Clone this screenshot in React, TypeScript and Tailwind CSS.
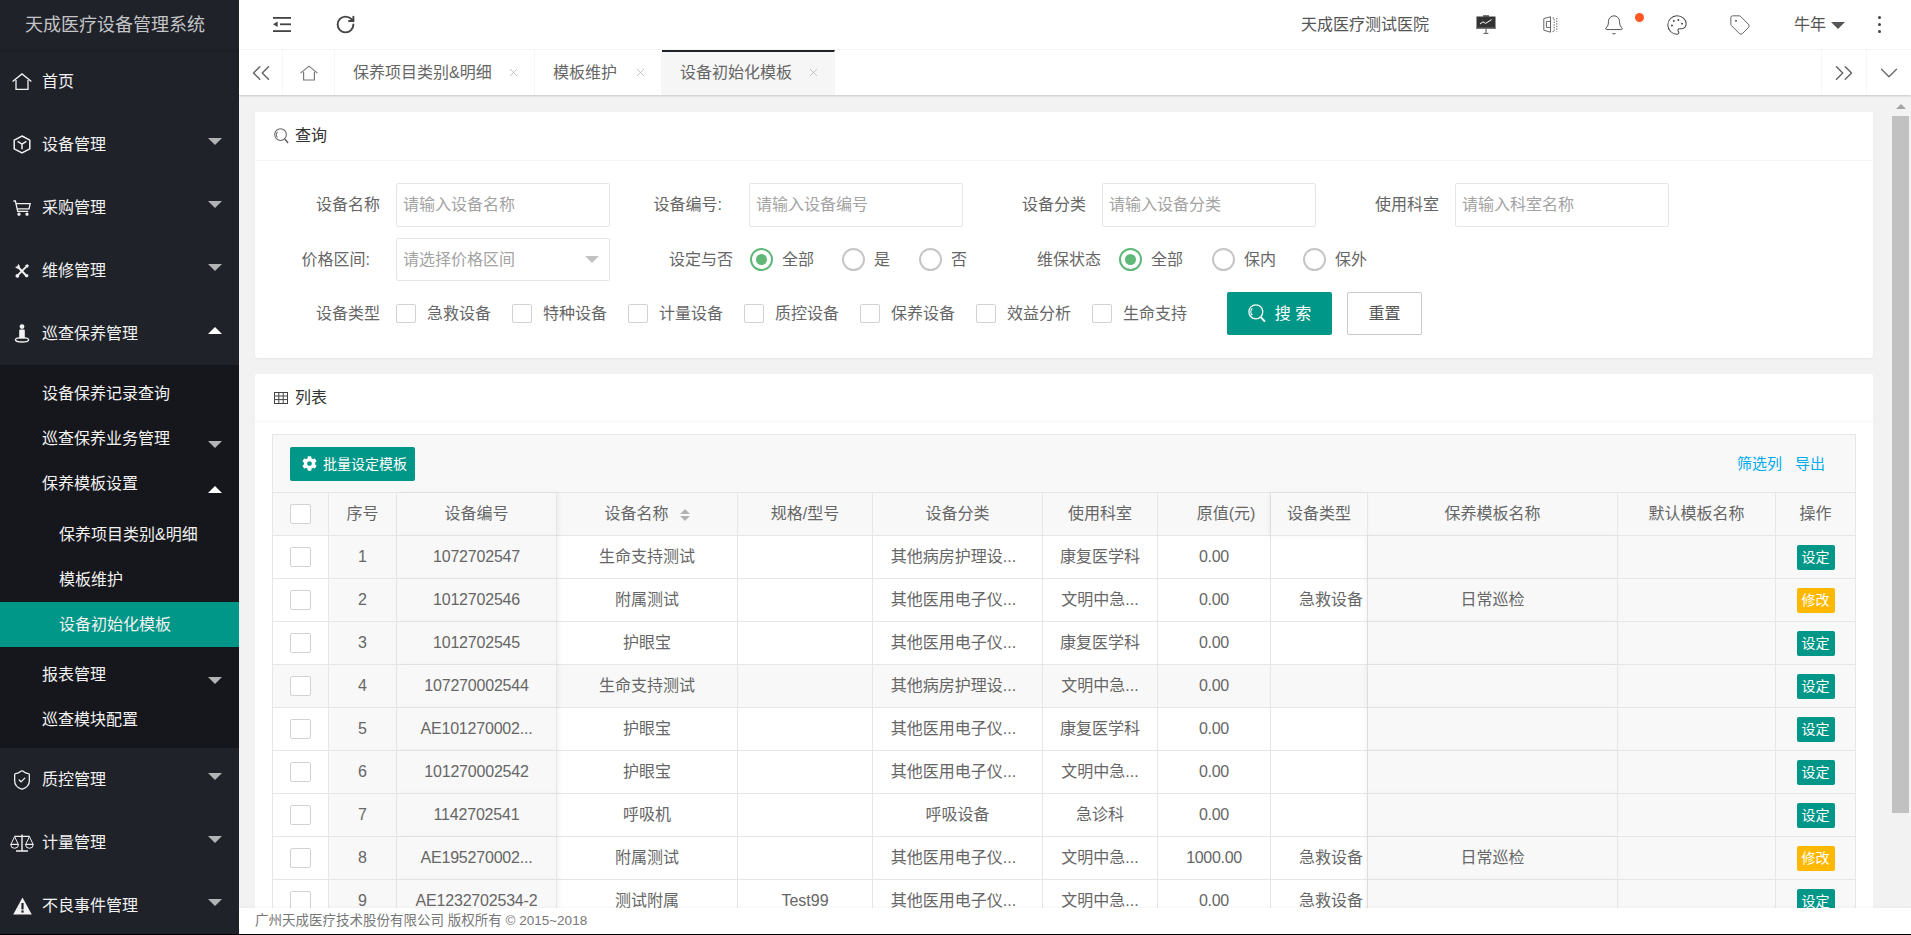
import { useState } from "react";
import {
  Bell,
  ChevronDown,
  ChevronsLeft,
  ChevronsRight,
  Palette,
  RotateCw,
  ShieldCheck,
  Tag,
  X,
} from "lucide-react";
import { FaCog } from "react-icons/fa";

const LINE = "border-[#e6e6e6]";

/* ---------- icons ---------- */

function HomeIcon({ className }: { className?: string }) {
  return (
    <svg viewBox="0 0 20 17" className={className} fill="none" stroke="currentColor" strokeWidth="1.3">
      <path d="M.6 8.6 10 .9l9.4 7.7" />
      <path d="M4 7v9.3h12V7" />
    </svg>
  );
}

function CubeIcon() {
  return (
    <svg viewBox="0 0 18 19" className="h-[19px] w-[18px]" fill="none" stroke="currentColor" strokeWidth="1.5">
      <path d="M9 1 16.8 5.2v8.6L9 18l-7.8-4.2V5.2z" />
      <path d="M4.6 6.4 9 9.2l4.4-2.8M9 9.2v5" />
    </svg>
  );
}

function CartIcon() {
  return (
    <svg viewBox="0 0 18 16" className="h-[16px] w-[18px]" fill="none" stroke="currentColor" strokeWidth="1.3">
      <path d="M.4 1h2l2.3 10.4h10.6" />
      <path d="M3.2 3.6h14l-1.2 5.2H4.3" />
      <circle cx="6" cy="14.2" r="1" fill="currentColor" />
      <circle cx="14" cy="14.2" r="1" fill="currentColor" />
    </svg>
  );
}

function ToolsIcon() {
  return (
    <svg viewBox="0 0 14 14" className="h-[14px] w-[14px]" fill="none" stroke="currentColor">
      <path d="M3 3 11.6 12" strokeWidth="2" />
      <path d="M11.6 2.4 2.6 11.4" strokeWidth="1.8" />
      <path d="M.6 3.2A2.8 2.8 0 0 0 4.2 3.8 2.8 2.8 0 0 0 3.4.4L2.6 2.4z" fill="currentColor" strokeWidth=".6" />
      <path d="m10.4 1.6 2-1.2 1.2 1.2-1.2 2z" fill="currentColor" strokeWidth=".6" />
      <circle cx="2.4" cy="11.8" r="1.9" fill="currentColor" stroke="none" />
      <path d="m9.8 12.4 2.6-2.6 1.2 2.2-1.6 1.6z" fill="currentColor" stroke="none" />
    </svg>
  );
}

function PersonIcon() {
  return (
    <svg viewBox="0 0 16 19" className="h-[19px] w-[16px]" fill="currentColor">
      <circle cx="8" cy="2.6" r="2.4" />
      <rect x="5.2" y="5.4" width="5.6" height="9" rx="1" />
      <ellipse cx="8" cy="15.8" rx="6.6" ry="2.2" fill="none" stroke="currentColor" strokeWidth="1.4" />
    </svg>
  );
}

function ScaleIcon() {
  return (
    <svg viewBox="0 0 24 18" className="h-[18px] w-[24px]" fill="none" stroke="currentColor" strokeWidth="1">
      <path d="M12 .5v16.4M6 17h12M4.4 2.4h15.2" strokeWidth="1.4" />
      <path d="M4.6 2.6.9 10.4h7.4zM19.4 2.6l-3.7 7.8h7.4z" />
      <path d="M.7 10.4a3.9 3.9 0 0 0 7.8 0zM15.5 10.4a3.9 3.9 0 0 0 7.8 0z" />
    </svg>
  );
}

function WarnIcon() {
  return (
    <svg viewBox="0 0 19 18" className="h-[18px] w-[19px]">
      <path d="M9.5.5 18.8 17.6H.2z" fill="currentColor" />
      <rect x="8.4" y="6" width="2.2" height="6.4" fill="#20222a" />
      <rect x="8.4" y="13.4" width="2.2" height="2.2" fill="#20222a" />
    </svg>
  );
}

function SearchIcon({ className }: { className?: string }) {
  return (
    <svg viewBox="0 0 17 18" className={className} fill="none" stroke="currentColor" strokeWidth="1.2">
      <circle cx="7.4" cy="7.4" r="6.6" />
      <path d="M4 4.2a4.6 4.6 0 0 0 0 6.4" />
      <path d="m12.2 12.4 3.8 4.4" strokeWidth="1.8" />
    </svg>
  );
}

function GridIcon() {
  return (
    <svg viewBox="0 0 14 12" className="h-[12px] w-[14px]" fill="none" stroke="#444" strokeWidth="1">
      <rect x=".5" y=".5" width="13" height="11" />
      <path d="M.5 4h13M.5 7.6h13M4.8.5v11M9.2.5v11" />
    </svg>
  );
}

function ShrinkIcon() {
  return (
    <svg viewBox="0 0 18 15" className="h-[15px] w-[18px]" fill="#444">
      <rect x="0" y="0" width="18" height="1.8" />
      <rect x="7" y="6.4" width="11" height="1.8" />
      <rect x="0" y="13.2" width="18" height="1.8" />
      <path d="M0 7.3 4.6 4.6v5.4z" />
    </svg>
  );
}

function BoardIcon() {
  return (
    <svg viewBox="0 0 20 19" className="h-[19px] w-[20px]">
      <rect x="7" y="0" width="6" height="2" fill="#777" />
      <rect x="0.5" y="1.5" width="19" height="11.5" fill="#333" />
      <rect x="0" y="12.6" width="20" height="1.4" fill="#777" />
      <path d="m4 9 3-2.2 2.6 1.6L15.6 4.6" fill="none" stroke="#fff" strokeWidth="1" />
      <path d="M10 14v4M7.6 18.4h4.8" stroke="#555" strokeWidth="1" />
    </svg>
  );
}

function BookIcon() {
  return (
    <svg viewBox="0 0 16 17" className="h-[17px] w-[16px]" fill="none" stroke="#666" strokeWidth="1">
      <path d="M.8 2.6 7.5.8v15.4l-6.7-2z" />
      <path d="M3.4 5.4h4.1v6H3.4z" />
      <path d="M9.6 2h1.6v13.6H9.6M13.8 2v13.6" strokeDasharray="1.4 1.2" />
    </svg>
  );
}

/* ---------- sidebar ---------- */

function Caret({ up, className }: { up?: boolean; className: string }) {
  return (
    <span
      className={`ml-auto mr-[17px] h-0 w-0 border-x-[7px] border-x-transparent ${
        up ? "border-b-[7px] border-b-white" : "border-t-[7px] border-t-[#b2b3b5]"
      } ${className}`}
    />
  );
}

function MenuItem({ icon, label, up, plain }: { icon: React.ReactNode; label: string; up?: boolean; plain?: boolean }) {
  return (
    <div className="flex h-[63px] shrink-0 items-center text-[16px] text-[#f2f2f2]">
      <span className="flex w-[42px] justify-center pl-[2px]">{icon}</span>
      <span>{label}</span>
      {!plain && <Caret up={up} className="mt-[-7px]" />}
    </div>
  );
}

function SubItem({ label, caret, up, inset, active }: { label: string; caret?: boolean; up?: boolean; inset?: boolean; active?: boolean }) {
  return (
    <div
      className={`flex h-[45px] items-center text-[16px] text-[#f2f2f2] ${inset ? "pl-[59px]" : "pl-[42px]"} ${
        active ? "bg-[#009688]" : ""
      }`}
    >
      <span>{label}</span>
      {caret && <Caret up={up} className="mt-[12px]" />}
    </div>
  );
}

function Sidebar() {
  return (
    <aside className="flex h-full w-[239px] shrink-0 flex-col overflow-hidden bg-[#20222a]">
      <div className="flex h-[50px] shrink-0 items-center pl-[25px] text-[18px] text-[#c4c5c7] shadow-[0_1px_2px_rgba(0,0,0,0.15)]">
        天成医疗设备管理系统
      </div>
      <MenuItem icon={<HomeIcon className="h-[17px] w-[20px]" />} label="首页" plain />
      <MenuItem icon={<CubeIcon />} label="设备管理" />
      <MenuItem icon={<CartIcon />} label="采购管理" />
      <MenuItem icon={<ToolsIcon />} label="维修管理" />
      <MenuItem icon={<PersonIcon />} label="巡查保养管理" up />
      <div className="shrink-0 bg-[#16171c] py-[6px]">
        <SubItem label="设备保养记录查询" />
        <SubItem label="巡查保养业务管理" caret />
        <SubItem label="保养模板设置" caret up />
        <div className="pb-[5px] pt-[6px]">
          <SubItem inset label="保养项目类别&明细" />
          <SubItem inset label="模板维护" />
          <SubItem inset active label="设备初始化模板" />
        </div>
        <SubItem label="报表管理" caret />
        <SubItem label="巡查模块配置" />
      </div>
      <MenuItem icon={<ShieldCheck size={22} strokeWidth={1.4} />} label="质控管理" />
      <MenuItem icon={<ScaleIcon />} label="计量管理" />
      <MenuItem icon={<WarnIcon />} label="不良事件管理" />
    </aside>
  );
}

/* ---------- top bars ---------- */

function TopBar() {
  return (
    <header className="flex h-[50px] shrink-0 items-center border-b border-[#f6f6f6] bg-white text-[16px] text-[#555]">
      <span className="ml-[34px]">
        <ShrinkIcon />
      </span>
      <RotateCw size={21} strokeWidth={2.2} className="ml-[44px] text-[#444]" />
      <span className="ml-auto">天成医疗测试医院</span>
      <span className="ml-[47px]">
        <BoardIcon />
      </span>
      <span className="ml-[47px]">
        <BookIcon />
      </span>
      <span className="relative ml-[44px]">
        <Bell size={22} strokeWidth={1} className="text-[#444]" />
        <span className="absolute left-[32px] top-[-1px] h-[9px] w-[9px] rounded-full bg-[#ff5722]" />
      </span>
      <Palette size={22} strokeWidth={1.1} className="ml-[41px] text-[#444]" />
      <Tag size={22} strokeWidth={0.9} className="ml-[41px] text-[#444]" />
      <span className="ml-[43px]">牛年</span>
      <span className="ml-[5px] mt-[2px] h-0 w-0 border-x-[7px] border-t-[7px] border-x-transparent border-t-[#555]" />
      <span className="ml-[33px] mr-[30px] flex flex-col gap-[4px]">
        <span className="h-[3px] w-[3px] rounded-full bg-[#444]" />
        <span className="h-[3px] w-[3px] rounded-full bg-[#444]" />
        <span className="h-[3px] w-[3px] rounded-full bg-[#444]" />
      </span>
    </header>
  );
}

function PageTab({ label, width, active }: { label: string; width: string; active?: boolean }) {
  return (
    <div
      className={`flex h-full items-center border-r border-[#f6f6f6] pl-[18px] pr-[14px] text-[16px] text-[#666] ${width} ${
        active ? "border-t-2 border-t-[#20222a] bg-[#f6f6f6] pb-[2px] text-[#333]" : ""
      }`}
    >
      <span>{label}</span>
      <X size={13} strokeWidth={1.2} className="ml-auto text-[#aaa]" />
    </div>
  );
}

function TabBar() {
  return (
    <div className="relative z-10 flex h-[45px] shrink-0 items-center bg-white shadow-[0_1px_2px_rgba(0,0,0,0.18)]">
      <div className="flex h-full w-[44px] items-center justify-center border-r border-[#f6f6f6] text-[#666]">
        <ChevronsLeft size={30} strokeWidth={1.2} />
      </div>
      <div className="flex h-full w-[52px] items-center justify-center border-r border-[#f6f6f6] text-[#777]">
        <HomeIcon className="h-[16px] w-[18px]" />
      </div>
      <PageTab label="保养项目类别&明细" width="w-[200px]" />
      <PageTab label="模板维护" width="w-[127px]" />
      <PageTab label="设备初始化模板" width="w-[173px]" active />
      <div className="ml-auto flex h-full w-[45px] items-center justify-center border-l border-[#f6f6f6] text-[#666]">
        <ChevronsRight size={30} strokeWidth={1.2} />
      </div>
      <div className="flex h-full w-[45px] items-center justify-center border-l border-[#f6f6f6] text-[#666]">
        <ChevronDown size={30} strokeWidth={1} />
      </div>
    </div>
  );
}

/* ---------- query form ---------- */

function TextField({ placeholder }: { placeholder: string }) {
  return (
    <input
      readOnly
      placeholder={placeholder}
      className="h-[44px] w-[214px] rounded-[2px] border border-[#e6e6e6] bg-white pl-[6px] text-[16px] outline-none placeholder:text-[#a3a3a3]"
    />
  );
}

function Radio({ label, width, checked }: { label: string; width: string; checked?: boolean }) {
  return (
    <div className={`flex items-center ${width}`}>
      <span
        className={`flex h-[23px] w-[23px] items-center justify-center rounded-full border-2 ${
          checked ? "border-[#5fb878]" : "border-[#c6c6c6]"
        }`}
      >
        {checked && <span className="h-[11px] w-[11px] rounded-full bg-[#5fb878]" />}
      </span>
      <span className="ml-[9px] text-[16px] text-[#666]">{label}</span>
    </div>
  );
}

function QueryCard() {
  const types = ["急救设备", "特种设备", "计量设备", "质控设备", "保养设备", "效益分析", "生命支持"];
  return (
    <section className="rounded-[2px] bg-white pb-[23px] shadow-[0_1px_2px_rgba(0,0,0,0.05)]">
      <div className="flex h-[49px] items-center border-b border-[#f6f6f6] pl-[19px] text-[16px] text-[#333]">
        <SearchIcon className="h-[16px] w-[15px] text-[#666]" />
        <span className="ml-[6px]">查询</span>
      </div>
      <div className="pt-[22px] text-[16px] text-[#666]">
        <div className="flex items-center">
          <span className="mr-[16px] w-[125px] text-right">设备名称</span>
          <TextField placeholder="请输入设备名称" />
          <span className="mr-[27px] w-[112px] text-right">设备编号:</span>
          <TextField placeholder="请输入设备编号" />
          <span className="mr-[16px] w-[123px] text-right">设备分类</span>
          <TextField placeholder="请输入设备分类" />
          <span className="mr-[16px] w-[123px] text-right">使用科室</span>
          <TextField placeholder="请输入科室名称" />
        </div>
        <div className="mt-[11px] flex items-center">
          <span className="mr-[26px] w-[115px] text-right">价格区间:</span>
          <div className="flex h-[43px] w-[214px] items-center rounded-[2px] border border-[#e6e6e6] pl-[6px] pr-[10px] text-[#a3a3a3]">
            <span>请选择价格区间</span>
            <span className="ml-auto h-0 w-0 border-x-[7px] border-t-[7px] border-x-transparent border-t-[#c2c2c2]" />
          </div>
          <span className="mr-[17px] w-[123px] text-right">设定与否</span>
          <Radio checked label="全部" width="w-[92px]" />
          <Radio label="是" width="w-[77px]" />
          <Radio label="否" width="w-[48px]" />
          <span className="mr-[18px] w-[134px] text-right">维保状态</span>
          <Radio checked label="全部" width="w-[93px]" />
          <Radio label="保内" width="w-[91px]" />
          <Radio label="保外" width="w-[65px]" />
        </div>
        <div className="mt-[11px] flex items-center">
          <span className="mr-[16px] w-[125px] text-right">设备类型</span>
          {types.map((t) => (
            <div key={t} className="flex w-[116px] items-center">
              <span className="h-[19px] w-[20px] rounded-[2px] border border-[#d2d2d2]" />
              <span className="ml-[11px]">{t}</span>
            </div>
          ))}
          <button className="ml-[19px] flex h-[43px] w-[105px] items-center justify-center rounded-[2px] bg-[#009688] text-[16px] text-white">
            <SearchIcon className="h-[19px] w-[18px]" />
            <span className="ml-[9px]">搜 索</span>
          </button>
          <button className="ml-[15px] h-[43px] w-[75px] rounded-[2px] border border-[#c9c9c9] bg-white text-[16px] text-[#555]">
            重置
          </button>
        </div>
      </div>
    </section>
  );
}

/* ---------- list ---------- */

const ROWS = [
  { no: "1072702547", name: "生命支持测试", cat: "其他病房护理设...", dept: "康复医学科", price: "0.00" },
  { no: "1012702546", name: "附属测试", cat: "其他医用电子仪...", dept: "文明中急...", price: "0.00", type: "急救设备", tpl: "日常巡检" },
  { no: "1012702545", name: "护眼宝", cat: "其他医用电子仪...", dept: "康复医学科", price: "0.00" },
  { no: "107270002544", name: "生命支持测试", cat: "其他病房护理设...", dept: "文明中急...", price: "0.00" },
  { no: "AE101270002...", name: "护眼宝", cat: "其他医用电子仪...", dept: "康复医学科", price: "0.00" },
  { no: "101270002542", name: "护眼宝", cat: "其他医用电子仪...", dept: "文明中急...", price: "0.00" },
  { no: "1142702541", name: "呼吸机", cat: "呼吸设备", dept: "急诊科", price: "0.00" },
  { no: "AE195270002...", name: "附属测试", cat: "其他医用电子仪...", dept: "文明中急...", price: "1000.00", type: "急救设备", tpl: "日常巡检" },
  { no: "AE1232702534-2", name: "测试附属", model: "Test99", cat: "其他医用电子仪...", dept: "文明中急...", price: "0.00", type: "急救设备" },
];

const COLS = [56, 68, 160, 181, 135, 170, 115, 113, 97, 250, 158, 79];
const HEAD = ["序号", "设备编号", "设备名称", "规格/型号", "设备分类", "使用科室", "原值(元)", "设备类型", "保养模板名称", "默认模板名称", "操作"];

const CELL = `h-[43px] border-b border-r ${LINE} p-0 text-center align-middle font-normal whitespace-nowrap`;
const SHADOW_LEFT = "relative shadow-[2px_0_5px_rgba(0,0,0,0.05)]";
const SHADOW_RIGHT = "relative shadow-[-2px_0_5px_rgba(0,0,0,0.05)]";

function Box() {
  return <span className="mx-auto block h-[20px] w-[21px] rounded-[2px] border border-[#d2d2d2] bg-white" />;
}

function SortMark() {
  return (
    <span className="ml-[11px] inline-flex flex-col gap-[2px] align-middle">
      <span className="h-0 w-0 border-x-[5px] border-b-[5px] border-x-transparent border-b-[#b2b2b2]" />
      <span className="h-0 w-0 border-x-[5px] border-t-[5px] border-x-transparent border-t-[#b2b2b2]" />
    </span>
  );
}

function ListCard() {
  const [hover] = useState(3);
  return (
    <section className="mt-[16px] rounded-[2px] bg-white px-[17px] pb-[20px]">
      <div className="-mx-[17px] flex h-[48px] items-center border-b border-[#f6f6f6] pl-[19px] text-[16px] text-[#333]">
        <GridIcon />
        <span className="ml-[7px]">列表</span>
      </div>
      <div className={`mt-[12px] border ${LINE} bg-white text-[16px] text-[#666]`}>
        <div className={`flex h-[58px] items-center border-b ${LINE} bg-[#f8f8f8] pl-[17px] pr-[30px]`}>
          <button className="flex h-[34px] w-[125px] items-center rounded-[2px] bg-[#009688] pl-[12px] text-[14px] text-white">
            <FaCog size={15} />
            <span className="ml-[6px]">批量设定模板</span>
          </button>
          <a className="ml-auto text-[15px] text-[#01aaed]">筛选列</a>
          <a className="ml-[13px] text-[15px] text-[#01aaed]">导出</a>
        </div>
        <table className="w-full table-fixed border-separate border-spacing-0">
          <colgroup>
            {COLS.map((w, i) => (
              <col key={i} style={{ width: w }} />
            ))}
          </colgroup>
          <thead>
            <tr className="bg-[#f8f8f8]">
              <th className={CELL}>
                <Box />
              </th>
              {HEAD.map((h, i) => (
                <th
                  key={h}
                  className={`${CELL} ${i === 1 ? SHADOW_LEFT : ""} ${i === 7 ? SHADOW_RIGHT : ""} ${i === 6 ? "pl-[24px]" : ""} ${
                    i === 10 ? "border-r-0" : ""
                  }`}
                >
                  {h}
                  {i === 2 && <SortMark />}
                </th>
              ))}
            </tr>
          </thead>
          <tbody>
            {ROWS.map((r, i) => {
              const rowBg = i === hover ? "bg-[#f8f8f8]" : "bg-white";
              return (
                <tr key={r.no}>
                  <td className={`${CELL} ${rowBg}`}>
                    <Box />
                  </td>
                  <td className={`${CELL} bg-[#f8f8f8]`}>{i + 1}</td>
                  <td className={`${CELL} ${SHADOW_LEFT} bg-[#f8f8f8] tracking-[-0.2px]`}>{r.no}</td>
                  <td className={`${CELL} ${rowBg}`}>{r.name}</td>
                  <td className={`${CELL} ${rowBg}`}>{r.model}</td>
                  <td className={`${CELL} ${rowBg} ${r.cat.endsWith("...") ? "pr-[8px]" : ""}`}>{r.cat}</td>
                  <td className={`${CELL} ${rowBg}`}>{r.dept}</td>
                  <td className={`${CELL} ${rowBg} tracking-[-0.3px]`}>{r.price}</td>
                  <td className={`${CELL} ${rowBg} pl-[24px]`}>{r.type}</td>
                  <td className={`${CELL} ${SHADOW_RIGHT} bg-[#f8f8f8]`}>{r.tpl}</td>
                  <td className={`${CELL} bg-[#f8f8f8]`} />
                  <td className={`${CELL} border-r-0 bg-[#f8f8f8]`}>
                    <span
                      className={`mx-auto flex h-[25px] w-[38px] items-center justify-center rounded-[2px] text-[14px] text-white ${
                        r.tpl ? "bg-[#ffb800]" : "bg-[#009688]"
                      }`}
                    >
                      {r.tpl ? "修改" : "设定"}
                    </span>
                  </td>
                </tr>
              );
            })}
          </tbody>
        </table>
      </div>
    </section>
  );
}

function ScrollRail() {
  return (
    <div className="flex w-[19px] shrink-0 flex-col items-center pr-[2px] pt-[9px]">
      <span className="h-0 w-0 border-x-[5px] border-b-[5px] border-x-transparent border-b-[#a3a3a3]" />
      <span className="mt-[7px] h-[697px] w-[17px] bg-[#c1c1c1]" />
    </div>
  );
}

export default function App() {
  return (
    <div className="h-[935px] overflow-hidden bg-black font-['Liberation_Sans','Noto_Sans_CJK_SC',sans-serif] leading-[22px]">
      <div className="flex h-[934px]">
        <Sidebar />
        <div className="flex min-w-0 flex-1 flex-col bg-[#f2f2f2]">
          <TopBar />
          <TabBar />
          <div className="flex min-h-0 flex-1 overflow-hidden">
            <main className="min-w-0 flex-1 pl-[16px] pr-[19px] pt-[17px]">
              <QueryCard />
              <ListCard />
            </main>
            <ScrollRail />
          </div>
          <footer className="relative z-10 flex h-[26px] shrink-0 items-center bg-white pl-[16px] text-[13.5px] text-[#777] shadow-[0_-1px_2px_rgba(0,0,0,0.04)]">
            广州天成医疗技术股份有限公司 版权所有 © 2015~2018
          </footer>
        </div>
      </div>
    </div>
  );
}
